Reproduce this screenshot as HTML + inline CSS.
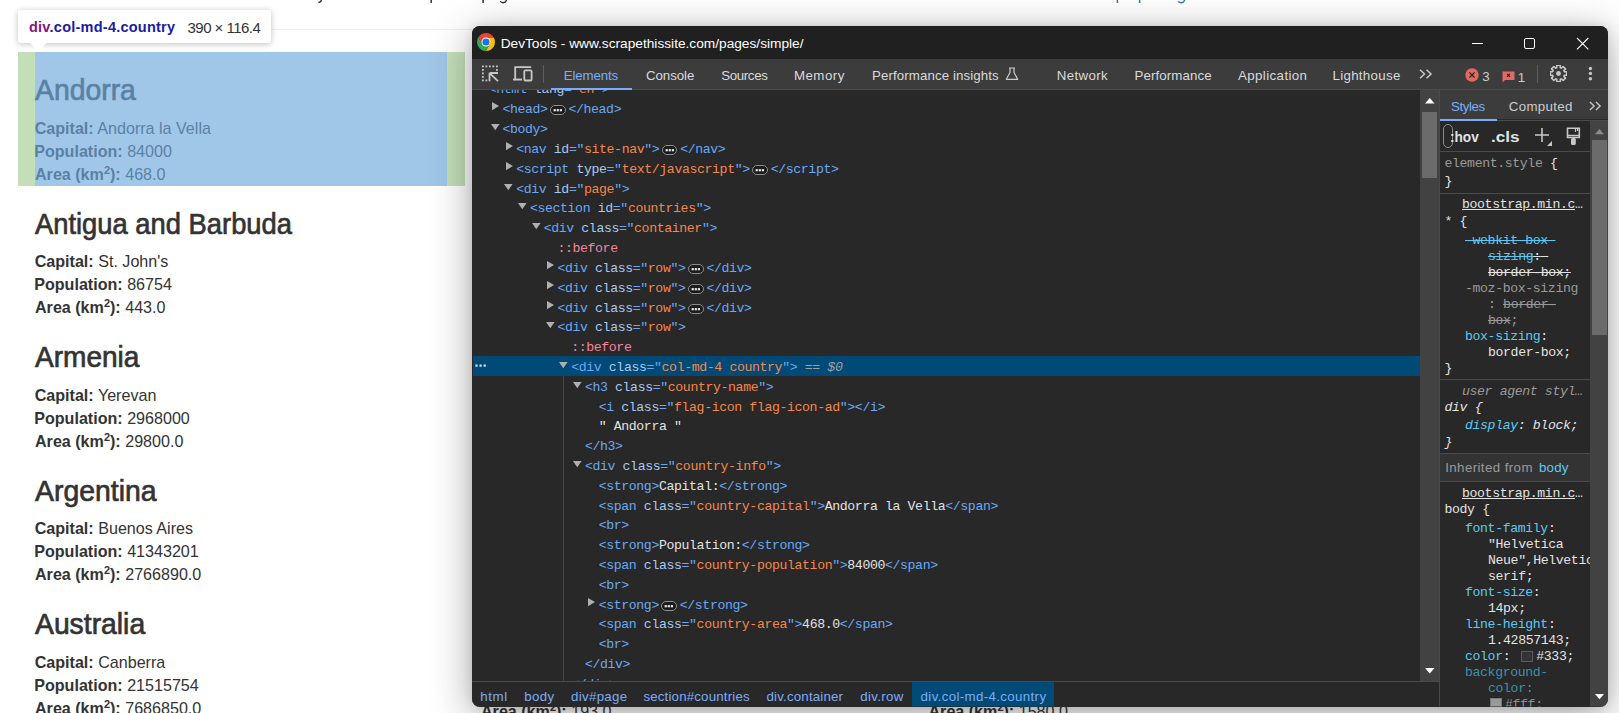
<!DOCTYPE html><html><head><meta charset="utf-8"><style>
*{margin:0;padding:0;box-sizing:border-box}
html,body{width:1619px;height:713px;overflow:hidden;background:#fff}
.t{position:absolute;white-space:pre;line-height:normal}
.a{position:absolute}
</style></head><body>
<svg class="a" style="left:0;top:0" width="1619" height="8" fill="none">
<path d="M321.5 -1 L321 1.2 Q320.3 2.6 318.3 2.6" stroke="#333" stroke-width="1.5"/>
<path d="M431.2 -1 V3" stroke="#333" stroke-width="1.5"/>
<path d="M483.1 -1 V3" stroke="#333" stroke-width="1.5"/>
<path d="M506.3 -1 V0.5 Q505.5 2.7 503.2 2.7 Q501 2.7 500.3 1.3" stroke="#333" stroke-width="1.4"/>
<path d="M1117.4 -1 V3" stroke="#337ab7" stroke-width="1.5"/>
<path d="M1139.6 -1 V3" stroke="#337ab7" stroke-width="1.5"/>
<path d="M1184.5 -1 V0.5 Q1183.7 2.7 1181.3 2.7 Q1179 2.7 1178.2 1.3" stroke="#337ab7" stroke-width="1.4"/>
</svg>
<div class="a" style="left:18px;top:29px;width:1590px;height:1px;background:#eee"></div>
<div class="t" style="left:35.00px;top:73.30px;font:normal normal 29.5px 'Liberation Sans';color:#333;transform:scaleX(0.9607);transform-origin:0 0;-webkit-text-stroke:0.7px #333;">Andorra</div>
<div class="t" style="left:34.70px;top:118.93px;font:normal normal 16.1px 'Liberation Sans';color:#333;"><span style="font-weight:bold">Capital:</span> Andorra la Vella</div>
<div class="t" style="left:34.20px;top:141.93px;font:normal normal 16.1px 'Liberation Sans';color:#333;"><span style="font-weight:bold">Population:</span> 84000</div>
<div class="t" style="left:35.00px;top:164.93px;font:normal normal 16.1px 'Liberation Sans';color:#333;"><span style="font-weight:bold">Area (km</span><span style="font-weight:bold;font-size:11px;position:relative;top:-6px">2</span><span style="font-weight:bold">):</span> 468.0</div>
<div class="t" style="left:35.00px;top:206.80px;font:normal normal 29.5px 'Liberation Sans';color:#333;transform:scaleX(0.9270);transform-origin:0 0;-webkit-text-stroke:0.7px #333;">Antigua and Barbuda</div>
<div class="t" style="left:34.70px;top:252.43px;font:normal normal 16.1px 'Liberation Sans';color:#333;"><span style="font-weight:bold">Capital:</span> St. John&#x27;s</div>
<div class="t" style="left:34.20px;top:275.43px;font:normal normal 16.1px 'Liberation Sans';color:#333;"><span style="font-weight:bold">Population:</span> 86754</div>
<div class="t" style="left:35.00px;top:298.43px;font:normal normal 16.1px 'Liberation Sans';color:#333;"><span style="font-weight:bold">Area (km</span><span style="font-weight:bold;font-size:11px;position:relative;top:-6px">2</span><span style="font-weight:bold">):</span> 443.0</div>
<div class="t" style="left:35.00px;top:340.30px;font:normal normal 29.5px 'Liberation Sans';color:#333;transform:scaleX(0.9507);transform-origin:0 0;-webkit-text-stroke:0.7px #333;">Armenia</div>
<div class="t" style="left:34.70px;top:385.93px;font:normal normal 16.1px 'Liberation Sans';color:#333;"><span style="font-weight:bold">Capital:</span> Yerevan</div>
<div class="t" style="left:34.20px;top:408.93px;font:normal normal 16.1px 'Liberation Sans';color:#333;"><span style="font-weight:bold">Population:</span> 2968000</div>
<div class="t" style="left:35.00px;top:431.93px;font:normal normal 16.1px 'Liberation Sans';color:#333;"><span style="font-weight:bold">Area (km</span><span style="font-weight:bold;font-size:11px;position:relative;top:-6px">2</span><span style="font-weight:bold">):</span> 29800.0</div>
<div class="t" style="left:35.00px;top:473.80px;font:normal normal 29.5px 'Liberation Sans';color:#333;transform:scaleX(0.9631);transform-origin:0 0;-webkit-text-stroke:0.7px #333;">Argentina</div>
<div class="t" style="left:34.70px;top:519.43px;font:normal normal 16.1px 'Liberation Sans';color:#333;"><span style="font-weight:bold">Capital:</span> Buenos Aires</div>
<div class="t" style="left:34.20px;top:542.43px;font:normal normal 16.1px 'Liberation Sans';color:#333;"><span style="font-weight:bold">Population:</span> 41343201</div>
<div class="t" style="left:35.00px;top:565.43px;font:normal normal 16.1px 'Liberation Sans';color:#333;"><span style="font-weight:bold">Area (km</span><span style="font-weight:bold;font-size:11px;position:relative;top:-6px">2</span><span style="font-weight:bold">):</span> 2766890.0</div>
<div class="t" style="left:35.00px;top:607.30px;font:normal normal 29.5px 'Liberation Sans';color:#333;transform:scaleX(0.9595);transform-origin:0 0;-webkit-text-stroke:0.7px #333;">Australia</div>
<div class="t" style="left:34.70px;top:652.93px;font:normal normal 16.1px 'Liberation Sans';color:#333;"><span style="font-weight:bold">Capital:</span> Canberra</div>
<div class="t" style="left:34.20px;top:675.93px;font:normal normal 16.1px 'Liberation Sans';color:#333;"><span style="font-weight:bold">Population:</span> 21515754</div>
<div class="t" style="left:35.00px;top:698.93px;font:normal normal 16.1px 'Liberation Sans';color:#333;"><span style="font-weight:bold">Area (km</span><span style="font-weight:bold;font-size:11px;position:relative;top:-6px">2</span><span style="font-weight:bold">):</span> 7686850.0</div>
<div class="t" style="left:481.00px;top:701.83px;font:normal normal 16.1px 'Liberation Sans';color:#333;"><span style="font-weight:bold">Area (km</span><span style="font-weight:bold;font-size:11px;position:relative;top:-6px">2</span><span style="font-weight:bold">):</span> 193.0</div>
<div class="t" style="left:928.50px;top:701.83px;font:normal normal 16.1px 'Liberation Sans';color:#333;"><span style="font-weight:bold">Area (km</span><span style="font-weight:bold;font-size:11px;position:relative;top:-6px">2</span><span style="font-weight:bold">):</span> 1580.0</div>
<div class="a" style="left:17.6px;top:52px;width:17.4px;height:134px;background:rgba(147,196,125,0.55)"></div>
<div class="a" style="left:447px;top:52px;width:18px;height:134px;background:rgba(147,196,125,0.55)"></div>
<div class="a" style="left:35px;top:52px;width:412px;height:134px;background:rgba(111,168,220,0.66)"></div>
<div class="a" style="left:18px;top:10px;width:253px;height:33px;background:#fff;border-radius:3px;box-shadow:0 1px 6px rgba(0,0,0,0.25)"></div>
<svg class="a" style="left:29px;top:42px" width="20" height="11" style="overflow:visible"><path d="M0.5 0 L9.5 10 L18.5 0 Z" fill="#fff"/></svg>
<div class="t" style="left:29.00px;top:19.38px;font:normal bold 14.5px 'Liberation Sans';color:#fff;letter-spacing:0.239px;"><span style="color:#881280">div</span><span style="color:#1a1aa6">.col-md-4.country</span></div>
<div class="t" style="left:187.50px;top:18.92px;font:normal normal 15px 'Liberation Sans';color:#333;letter-spacing:-0.520px;">390 × 116.4</div>
<div class="a" style="left:472px;top:26px;width:1136px;height:680.5px;border-radius:8px;background:#282828;box-shadow:0 8px 40px rgba(0,0,0,0.36),0 0 10px rgba(0,0,0,0.10)"></div>
<div class="a" style="left:0;top:0;width:1619px;height:713px;clip-path:inset(26px 11px 6.5px 472px round 8px)">
<div class="a" style="left:472px;top:26px;width:1136px;height:33px;background:#202020"></div>
<div class="a" style="left:472px;top:59px;width:1136px;height:30px;background:#3c3c3c"></div>
<div class="a" style="left:472px;top:89px;width:1136px;height:1px;background:#4a4a4a"></div>
<div class="a" style="left:472px;top:90px;width:948px;height:591px;background:#282828"></div>
<div class="a" style="left:1420px;top:90px;width:19px;height:591px;background:#424242"></div>
<div class="a" style="left:1439px;top:90px;width:1px;height:617px;background:#4a4a4a"></div>
<div class="a" style="left:472px;top:681px;width:967px;height:26px;background:#282828;border-top:1px solid #4a4a4a"></div>
<div class="a" style="left:0;top:0;width:1619px;height:713px;clip-path:inset(90px 199px 32px 472px)">
<div class="a" style="left:473px;top:356px;width:947px;height:20px;background:#004a77"></div>
<div class="a" style="left:563px;top:375.66px;width:1px;height:320px;background:#474747"></div>
<svg class="a" style="left:475px;top:363.5px" width="12" height="4"><g fill="#e0e0e0"><rect x="0.4" y="0.5" width="2.2" height="2.2"/><rect x="4.5" y="0.5" width="2.2" height="2.2"/><rect x="8.6" y="0.5" width="2.2" height="2.2"/></g></svg>
<div class="t" style="left:488.65px;top:82.01px;font:normal normal 13.2px 'Liberation Mono';color:#fff;letter-spacing:-0.380px;"><span style="color:#6aa8f6">&lt;html</span><span style="color:#6aa8f6"> </span><span style="color:#a9c9f2">lang</span><span style="color:#6aa8f6">=&quot;</span><span style="color:#f5874b">en</span><span style="color:#6aa8f6">&quot;</span><span style="color:#6aa8f6">&gt;</span></div>
<svg class="a" style="left:491.80px;top:101.90px" width="8" height="9"><path d="M0 0 V8.2 L7 4.1 Z" fill="#b0b0b0"/></svg>
<div class="t" style="left:502.40px;top:102.01px;font:normal normal 13.2px 'Liberation Mono';color:#fff;letter-spacing:-0.380px;"><span style="color:#6aa8f6">&lt;head</span><span style="color:#6aa8f6">&gt;</span></div>
<div class="a" style="left:550.14px;top:104.60px;width:15.5px;height:10.7px;border:1px solid #8e8e8e;border-radius:6px;background:#1b1b1b"></div>
<svg class="a" style="left:550.14px;top:104.60px" width="15.5" height="10.7"><g fill="#e8e8e8"><rect x="3.6" y="4.1" width="2.2" height="2.2"/><rect x="6.7" y="4.1" width="2.2" height="2.2"/><rect x="9.8" y="4.1" width="2.2" height="2.2"/></g></svg>
<div class="t" style="left:568.44px;top:102.01px;font:normal normal 13.2px 'Liberation Mono';color:#fff;letter-spacing:-0.380px;"><span style="color:#6aa8f6">&lt;/head&gt;</span></div>
<svg class="a" style="left:490.50px;top:123.60px" width="9" height="7"><path d="M0 0 H8.6 L4.3 6.2 Z" fill="#b0b0b0"/></svg>
<div class="t" style="left:502.40px;top:122.01px;font:normal normal 13.2px 'Liberation Mono';color:#fff;letter-spacing:-0.380px;"><span style="color:#6aa8f6">&lt;body</span><span style="color:#6aa8f6">&gt;</span></div>
<svg class="a" style="left:505.55px;top:141.90px" width="8" height="9"><path d="M0 0 V8.2 L7 4.1 Z" fill="#b0b0b0"/></svg>
<div class="t" style="left:516.15px;top:142.01px;font:normal normal 13.2px 'Liberation Mono';color:#fff;letter-spacing:-0.380px;"><span style="color:#6aa8f6">&lt;nav</span><span style="color:#6aa8f6"> </span><span style="color:#a9c9f2">id</span><span style="color:#6aa8f6">=&quot;</span><span style="color:#f5874b">site-nav</span><span style="color:#6aa8f6">&quot;</span><span style="color:#6aa8f6">&gt;</span></div>
<div class="a" style="left:661.91px;top:144.60px;width:15.5px;height:10.7px;border:1px solid #8e8e8e;border-radius:6px;background:#1b1b1b"></div>
<svg class="a" style="left:661.91px;top:144.60px" width="15.5" height="10.7"><g fill="#e8e8e8"><rect x="3.6" y="4.1" width="2.2" height="2.2"/><rect x="6.7" y="4.1" width="2.2" height="2.2"/><rect x="9.8" y="4.1" width="2.2" height="2.2"/></g></svg>
<div class="t" style="left:680.21px;top:142.01px;font:normal normal 13.2px 'Liberation Mono';color:#fff;letter-spacing:-0.380px;"><span style="color:#6aa8f6">&lt;/nav&gt;</span></div>
<svg class="a" style="left:505.55px;top:161.90px" width="8" height="9"><path d="M0 0 V8.2 L7 4.1 Z" fill="#b0b0b0"/></svg>
<div class="t" style="left:516.15px;top:162.01px;font:normal normal 13.2px 'Liberation Mono';color:#fff;letter-spacing:-0.380px;"><span style="color:#6aa8f6">&lt;script</span><span style="color:#6aa8f6"> </span><span style="color:#a9c9f2">type</span><span style="color:#6aa8f6">=&quot;</span><span style="color:#f5874b">text/javascript</span><span style="color:#6aa8f6">&quot;</span><span style="color:#6aa8f6">&gt;</span></div>
<div class="a" style="left:752.40px;top:164.60px;width:15.5px;height:10.7px;border:1px solid #8e8e8e;border-radius:6px;background:#1b1b1b"></div>
<svg class="a" style="left:752.40px;top:164.60px" width="15.5" height="10.7"><g fill="#e8e8e8"><rect x="3.6" y="4.1" width="2.2" height="2.2"/><rect x="6.7" y="4.1" width="2.2" height="2.2"/><rect x="9.8" y="4.1" width="2.2" height="2.2"/></g></svg>
<div class="t" style="left:770.70px;top:162.01px;font:normal normal 13.2px 'Liberation Mono';color:#fff;letter-spacing:-0.380px;"><span style="color:#6aa8f6">&lt;/script&gt;</span></div>
<svg class="a" style="left:504.25px;top:183.60px" width="9" height="7"><path d="M0 0 H8.6 L4.3 6.2 Z" fill="#b0b0b0"/></svg>
<div class="t" style="left:516.15px;top:182.01px;font:normal normal 13.2px 'Liberation Mono';color:#fff;letter-spacing:-0.380px;"><span style="color:#6aa8f6">&lt;div</span><span style="color:#6aa8f6"> </span><span style="color:#a9c9f2">id</span><span style="color:#6aa8f6">=&quot;</span><span style="color:#f5874b">page</span><span style="color:#6aa8f6">&quot;</span><span style="color:#6aa8f6">&gt;</span></div>
<svg class="a" style="left:518.00px;top:202.60px" width="9" height="7"><path d="M0 0 H8.6 L4.3 6.2 Z" fill="#b0b0b0"/></svg>
<div class="t" style="left:529.90px;top:201.01px;font:normal normal 13.2px 'Liberation Mono';color:#fff;letter-spacing:-0.380px;"><span style="color:#6aa8f6">&lt;section</span><span style="color:#6aa8f6"> </span><span style="color:#a9c9f2">id</span><span style="color:#6aa8f6">=&quot;</span><span style="color:#f5874b">countries</span><span style="color:#6aa8f6">&quot;</span><span style="color:#6aa8f6">&gt;</span></div>
<svg class="a" style="left:531.75px;top:222.60px" width="9" height="7"><path d="M0 0 H8.6 L4.3 6.2 Z" fill="#b0b0b0"/></svg>
<div class="t" style="left:543.65px;top:221.01px;font:normal normal 13.2px 'Liberation Mono';color:#fff;letter-spacing:-0.380px;"><span style="color:#6aa8f6">&lt;div</span><span style="color:#6aa8f6"> </span><span style="color:#a9c9f2">class</span><span style="color:#6aa8f6">=&quot;</span><span style="color:#f5874b">container</span><span style="color:#6aa8f6">&quot;</span><span style="color:#6aa8f6">&gt;</span></div>
<div class="t" style="left:557.40px;top:241.01px;font:normal normal 13.2px 'Liberation Mono';color:#fff;letter-spacing:-0.380px;"><span style="color:#f7849c">::before</span></div>
<svg class="a" style="left:546.80px;top:260.90px" width="8" height="9"><path d="M0 0 V8.2 L7 4.1 Z" fill="#b0b0b0"/></svg>
<div class="t" style="left:557.40px;top:261.01px;font:normal normal 13.2px 'Liberation Mono';color:#fff;letter-spacing:-0.380px;"><span style="color:#6aa8f6">&lt;div</span><span style="color:#6aa8f6"> </span><span style="color:#a9c9f2">class</span><span style="color:#6aa8f6">=&quot;</span><span style="color:#f5874b">row</span><span style="color:#6aa8f6">&quot;</span><span style="color:#6aa8f6">&gt;</span></div>
<div class="a" style="left:688.08px;top:263.60px;width:15.5px;height:10.7px;border:1px solid #8e8e8e;border-radius:6px;background:#1b1b1b"></div>
<svg class="a" style="left:688.08px;top:263.60px" width="15.5" height="10.7"><g fill="#e8e8e8"><rect x="3.6" y="4.1" width="2.2" height="2.2"/><rect x="6.7" y="4.1" width="2.2" height="2.2"/><rect x="9.8" y="4.1" width="2.2" height="2.2"/></g></svg>
<div class="t" style="left:706.38px;top:261.01px;font:normal normal 13.2px 'Liberation Mono';color:#fff;letter-spacing:-0.380px;"><span style="color:#6aa8f6">&lt;/div&gt;</span></div>
<svg class="a" style="left:546.80px;top:280.90px" width="8" height="9"><path d="M0 0 V8.2 L7 4.1 Z" fill="#b0b0b0"/></svg>
<div class="t" style="left:557.40px;top:281.01px;font:normal normal 13.2px 'Liberation Mono';color:#fff;letter-spacing:-0.380px;"><span style="color:#6aa8f6">&lt;div</span><span style="color:#6aa8f6"> </span><span style="color:#a9c9f2">class</span><span style="color:#6aa8f6">=&quot;</span><span style="color:#f5874b">row</span><span style="color:#6aa8f6">&quot;</span><span style="color:#6aa8f6">&gt;</span></div>
<div class="a" style="left:688.08px;top:283.60px;width:15.5px;height:10.7px;border:1px solid #8e8e8e;border-radius:6px;background:#1b1b1b"></div>
<svg class="a" style="left:688.08px;top:283.60px" width="15.5" height="10.7"><g fill="#e8e8e8"><rect x="3.6" y="4.1" width="2.2" height="2.2"/><rect x="6.7" y="4.1" width="2.2" height="2.2"/><rect x="9.8" y="4.1" width="2.2" height="2.2"/></g></svg>
<div class="t" style="left:706.38px;top:281.01px;font:normal normal 13.2px 'Liberation Mono';color:#fff;letter-spacing:-0.380px;"><span style="color:#6aa8f6">&lt;/div&gt;</span></div>
<svg class="a" style="left:546.80px;top:300.90px" width="8" height="9"><path d="M0 0 V8.2 L7 4.1 Z" fill="#b0b0b0"/></svg>
<div class="t" style="left:557.40px;top:301.01px;font:normal normal 13.2px 'Liberation Mono';color:#fff;letter-spacing:-0.380px;"><span style="color:#6aa8f6">&lt;div</span><span style="color:#6aa8f6"> </span><span style="color:#a9c9f2">class</span><span style="color:#6aa8f6">=&quot;</span><span style="color:#f5874b">row</span><span style="color:#6aa8f6">&quot;</span><span style="color:#6aa8f6">&gt;</span></div>
<div class="a" style="left:688.08px;top:303.60px;width:15.5px;height:10.7px;border:1px solid #8e8e8e;border-radius:6px;background:#1b1b1b"></div>
<svg class="a" style="left:688.08px;top:303.60px" width="15.5" height="10.7"><g fill="#e8e8e8"><rect x="3.6" y="4.1" width="2.2" height="2.2"/><rect x="6.7" y="4.1" width="2.2" height="2.2"/><rect x="9.8" y="4.1" width="2.2" height="2.2"/></g></svg>
<div class="t" style="left:706.38px;top:301.01px;font:normal normal 13.2px 'Liberation Mono';color:#fff;letter-spacing:-0.380px;"><span style="color:#6aa8f6">&lt;/div&gt;</span></div>
<svg class="a" style="left:545.50px;top:321.60px" width="9" height="7"><path d="M0 0 H8.6 L4.3 6.2 Z" fill="#b0b0b0"/></svg>
<div class="t" style="left:557.40px;top:320.01px;font:normal normal 13.2px 'Liberation Mono';color:#fff;letter-spacing:-0.380px;"><span style="color:#6aa8f6">&lt;div</span><span style="color:#6aa8f6"> </span><span style="color:#a9c9f2">class</span><span style="color:#6aa8f6">=&quot;</span><span style="color:#f5874b">row</span><span style="color:#6aa8f6">&quot;</span><span style="color:#6aa8f6">&gt;</span></div>
<div class="t" style="left:571.15px;top:340.01px;font:normal normal 13.2px 'Liberation Mono';color:#fff;letter-spacing:-0.380px;"><span style="color:#f7849c">::before</span></div>
<svg class="a" style="left:559.25px;top:361.60px" width="9" height="7"><path d="M0 0 H8.6 L4.3 6.2 Z" fill="#b0b0b0"/></svg>
<div class="t" style="left:571.15px;top:360.01px;font:normal normal 13.2px 'Liberation Mono';color:#fff;letter-spacing:-0.380px;"><span style="color:#6aa8f6">&lt;div</span><span style="color:#6aa8f6"> </span><span style="color:#a9c9f2">class</span><span style="color:#6aa8f6">=&quot;</span><span style="color:#f5874b">col-md-4 country</span><span style="color:#6aa8f6">&quot;</span><span style="color:#6aa8f6">&gt;</span><span style="color:#a0a0a0;font-style:italic"> == </span><span style="color:#a0a0a0;font-style:italic">$0</span></div>
<svg class="a" style="left:573.00px;top:381.60px" width="9" height="7"><path d="M0 0 H8.6 L4.3 6.2 Z" fill="#b0b0b0"/></svg>
<div class="t" style="left:584.90px;top:380.01px;font:normal normal 13.2px 'Liberation Mono';color:#fff;letter-spacing:-0.380px;"><span style="color:#6aa8f6">&lt;h3</span><span style="color:#6aa8f6"> </span><span style="color:#a9c9f2">class</span><span style="color:#6aa8f6">=&quot;</span><span style="color:#f5874b">country-name</span><span style="color:#6aa8f6">&quot;</span><span style="color:#6aa8f6">&gt;</span></div>
<div class="t" style="left:598.65px;top:400.01px;font:normal normal 13.2px 'Liberation Mono';color:#fff;letter-spacing:-0.380px;"><span style="color:#6aa8f6">&lt;i</span><span style="color:#6aa8f6"> </span><span style="color:#a9c9f2">class</span><span style="color:#6aa8f6">=&quot;</span><span style="color:#f5874b">flag-icon flag-icon-ad</span><span style="color:#6aa8f6">&quot;</span><span style="color:#6aa8f6">&gt;</span><span style="color:#6aa8f6">&lt;/i&gt;</span></div>
<div class="t" style="left:598.65px;top:419.01px;font:normal normal 13.2px 'Liberation Mono';color:#fff;letter-spacing:-0.380px;"><span style="color:#e3e3e3">&quot; Andorra &quot;</span></div>
<div class="t" style="left:584.90px;top:439.01px;font:normal normal 13.2px 'Liberation Mono';color:#fff;letter-spacing:-0.380px;"><span style="color:#6aa8f6">&lt;/h3&gt;</span></div>
<svg class="a" style="left:573.00px;top:460.60px" width="9" height="7"><path d="M0 0 H8.6 L4.3 6.2 Z" fill="#b0b0b0"/></svg>
<div class="t" style="left:584.90px;top:459.01px;font:normal normal 13.2px 'Liberation Mono';color:#fff;letter-spacing:-0.380px;"><span style="color:#6aa8f6">&lt;div</span><span style="color:#6aa8f6"> </span><span style="color:#a9c9f2">class</span><span style="color:#6aa8f6">=&quot;</span><span style="color:#f5874b">country-info</span><span style="color:#6aa8f6">&quot;</span><span style="color:#6aa8f6">&gt;</span></div>
<div class="t" style="left:598.65px;top:479.01px;font:normal normal 13.2px 'Liberation Mono';color:#fff;letter-spacing:-0.380px;"><span style="color:#6aa8f6">&lt;strong</span><span style="color:#6aa8f6">&gt;</span><span style="color:#e3e3e3">Capital:</span><span style="color:#6aa8f6">&lt;/strong&gt;</span></div>
<div class="t" style="left:598.65px;top:499.01px;font:normal normal 13.2px 'Liberation Mono';color:#fff;letter-spacing:-0.380px;"><span style="color:#6aa8f6">&lt;span</span><span style="color:#6aa8f6"> </span><span style="color:#a9c9f2">class</span><span style="color:#6aa8f6">=&quot;</span><span style="color:#f5874b">country-capital</span><span style="color:#6aa8f6">&quot;</span><span style="color:#6aa8f6">&gt;</span><span style="color:#e3e3e3">Andorra la Vella</span><span style="color:#6aa8f6">&lt;/span&gt;</span></div>
<div class="t" style="left:598.65px;top:518.01px;font:normal normal 13.2px 'Liberation Mono';color:#fff;letter-spacing:-0.380px;"><span style="color:#6aa8f6">&lt;br</span><span style="color:#6aa8f6">&gt;</span></div>
<div class="t" style="left:598.65px;top:538.01px;font:normal normal 13.2px 'Liberation Mono';color:#fff;letter-spacing:-0.380px;"><span style="color:#6aa8f6">&lt;strong</span><span style="color:#6aa8f6">&gt;</span><span style="color:#e3e3e3">Population:</span><span style="color:#6aa8f6">&lt;/strong&gt;</span></div>
<div class="t" style="left:598.65px;top:558.01px;font:normal normal 13.2px 'Liberation Mono';color:#fff;letter-spacing:-0.380px;"><span style="color:#6aa8f6">&lt;span</span><span style="color:#6aa8f6"> </span><span style="color:#a9c9f2">class</span><span style="color:#6aa8f6">=&quot;</span><span style="color:#f5874b">country-population</span><span style="color:#6aa8f6">&quot;</span><span style="color:#6aa8f6">&gt;</span><span style="color:#e3e3e3">84000</span><span style="color:#6aa8f6">&lt;/span&gt;</span></div>
<div class="t" style="left:598.65px;top:578.01px;font:normal normal 13.2px 'Liberation Mono';color:#fff;letter-spacing:-0.380px;"><span style="color:#6aa8f6">&lt;br</span><span style="color:#6aa8f6">&gt;</span></div>
<svg class="a" style="left:588.05px;top:597.90px" width="8" height="9"><path d="M0 0 V8.2 L7 4.1 Z" fill="#b0b0b0"/></svg>
<div class="t" style="left:598.65px;top:598.01px;font:normal normal 13.2px 'Liberation Mono';color:#fff;letter-spacing:-0.380px;"><span style="color:#6aa8f6">&lt;strong</span><span style="color:#6aa8f6">&gt;</span></div>
<div class="a" style="left:661.47px;top:600.60px;width:15.5px;height:10.7px;border:1px solid #8e8e8e;border-radius:6px;background:#1b1b1b"></div>
<svg class="a" style="left:661.47px;top:600.60px" width="15.5" height="10.7"><g fill="#e8e8e8"><rect x="3.6" y="4.1" width="2.2" height="2.2"/><rect x="6.7" y="4.1" width="2.2" height="2.2"/><rect x="9.8" y="4.1" width="2.2" height="2.2"/></g></svg>
<div class="t" style="left:679.77px;top:598.01px;font:normal normal 13.2px 'Liberation Mono';color:#fff;letter-spacing:-0.380px;"><span style="color:#6aa8f6">&lt;/strong&gt;</span></div>
<div class="t" style="left:598.65px;top:617.01px;font:normal normal 13.2px 'Liberation Mono';color:#fff;letter-spacing:-0.380px;"><span style="color:#6aa8f6">&lt;span</span><span style="color:#6aa8f6"> </span><span style="color:#a9c9f2">class</span><span style="color:#6aa8f6">=&quot;</span><span style="color:#f5874b">country-area</span><span style="color:#6aa8f6">&quot;</span><span style="color:#6aa8f6">&gt;</span><span style="color:#e3e3e3">468.0</span><span style="color:#6aa8f6">&lt;/span&gt;</span></div>
<div class="t" style="left:598.65px;top:637.01px;font:normal normal 13.2px 'Liberation Mono';color:#fff;letter-spacing:-0.380px;"><span style="color:#6aa8f6">&lt;br</span><span style="color:#6aa8f6">&gt;</span></div>
<div class="t" style="left:584.90px;top:657.01px;font:normal normal 13.2px 'Liberation Mono';color:#fff;letter-spacing:-0.380px;"><span style="color:#6aa8f6">&lt;/div&gt;</span></div>
<div class="t" style="left:571.15px;top:677.01px;font:normal normal 13.2px 'Liberation Mono';color:#fff;letter-spacing:-0.380px;"><span style="color:#6aa8f6">&lt;/div&gt;</span></div>
</div>
<svg class="a" style="left:477px;top:33px" width="18" height="18" viewBox="0 0 18 18">
<path d="M9 4.7 L16.9 4.7 A9 9 0 0 0 1.326 4.308 L5.276 11.15 L9 9 Z" fill="#ea4335"/>
<path d="M12.72 11.15 L8.77 17.99 A9 9 0 0 0 16.9 4.7 L9 4.7 L9 9 Z" fill="#fbbc04"/>
<path d="M5.276 11.15 L1.326 4.308 A9 9 0 0 0 8.77 17.99 L12.72 11.15 L9 9 Z" fill="#34a853"/>
<circle cx="9" cy="9" r="4.5" fill="#fff"/><circle cx="9" cy="9" r="3.6" fill="#1a73e8"/></svg>
<div class="t" style="left:500.70px;top:35.60px;font:normal normal 13.7px 'Liberation Sans';color:#ffffff;letter-spacing:0.001px;">DevTools - www.scrapethissite.com/pages/simple/</div>
<div class="a" style="left:1471.7px;top:42.9px;width:11.3px;height:1.1px;background:#fff"></div>
<div class="a" style="left:1524.1px;top:38.1px;width:11px;height:11px;border:1.1px solid #fff;border-radius:2px"></div>
<svg class="a" style="left:1576px;top:37px" width="14" height="14"><path d="M1 1 L12.3 12.3 M12.3 1 L1 12.3" stroke="#fff" stroke-width="1.1"/></svg>
<svg class="a" style="left:481px;top:64px" width="20" height="20" viewBox="0 0 20 20" fill="none">
<g fill="#c7c7c7"><rect x="1" y="1.5" width="1.8" height="1.8"/><rect x="4.5" y="1.5" width="1.8" height="1.8"/><rect x="8" y="1.5" width="1.8" height="1.8"/><rect x="11.5" y="1.5" width="1.8" height="1.8"/><rect x="15" y="1.5" width="1.8" height="1.8"/>
<rect x="1" y="5" width="1.8" height="1.8"/><rect x="1" y="8.5" width="1.8" height="1.8"/><rect x="1" y="12" width="1.8" height="1.8"/><rect x="1" y="15.5" width="1.8" height="1.8"/><rect x="4.5" y="15.5" width="1.8" height="1.8"/>
<rect x="15" y="5" width="1.8" height="1.8"/></g>
<path d="M8.5 9 H17 M8.5 9 V17.2 M8.8 9.3 L17 17.2" stroke="#c7c7c7" stroke-width="1.8"/></svg>
<svg class="a" style="left:512px;top:65px" width="22" height="17" viewBox="0 0 22 17" fill="none">
<path d="M3.2 14.5 V2.2 H19.2" stroke="#c7c7c7" stroke-width="1.8"/>
<rect x="1" y="13.6" width="9" height="1.9" fill="#c7c7c7"/>
<rect x="12.3" y="5.4" width="7.3" height="10.1" rx="1" stroke="#c7c7c7" stroke-width="1.8"/></svg>
<div class="a" style="left:543px;top:65px;width:1px;height:18px;background:#5e5e5e"></div>
<div class="t" style="left:563.80px;top:67.66px;font:normal normal 13.3px 'Liberation Sans';color:#7cacf8;letter-spacing:-0.140px;">Elements</div>
<div class="t" style="left:646.00px;top:67.66px;font:normal normal 13.3px 'Liberation Sans';color:#dadada;letter-spacing:-0.065px;">Console</div>
<div class="t" style="left:721.20px;top:67.66px;font:normal normal 13.3px 'Liberation Sans';color:#dadada;letter-spacing:-0.355px;">Sources</div>
<div class="t" style="left:793.90px;top:67.66px;font:normal normal 13.3px 'Liberation Sans';color:#dadada;letter-spacing:0.506px;">Memory</div>
<div class="t" style="left:872.00px;top:67.66px;font:normal normal 13.3px 'Liberation Sans';color:#dadada;letter-spacing:0.092px;">Performance insights</div>
<div class="t" style="left:1056.70px;top:67.66px;font:normal normal 13.3px 'Liberation Sans';color:#dadada;letter-spacing:0.364px;">Network</div>
<div class="t" style="left:1134.50px;top:67.66px;font:normal normal 13.3px 'Liberation Sans';color:#dadada;letter-spacing:0.098px;">Performance</div>
<div class="t" style="left:1238.00px;top:67.66px;font:normal normal 13.3px 'Liberation Sans';color:#dadada;letter-spacing:0.395px;">Application</div>
<div class="t" style="left:1332.50px;top:67.66px;font:normal normal 13.3px 'Liberation Sans';color:#dadada;letter-spacing:0.304px;">Lighthouse</div>
<div class="a" style="left:551px;top:88px;width:81px;height:2px;background:#7cacf8"></div>
<svg class="a" style="left:1005px;top:67px" width="14" height="14" viewBox="0 0 14 14" fill="none"><path d="M4 1 H10 M5 1 V5.5 L1.3 12.3 H12.7 L9 5.5 V1" stroke="#cccccc" stroke-width="1.2" stroke-linejoin="round"/></svg>
<svg class="a" style="left:1418.6px;top:69px" width="14" height="10" viewBox="0 0 14 10" fill="none"><path d="M1 0.8 L5.5 5 L1 9.2 M7.5 0.8 L12 5 L7.5 9.2" stroke="#c7c7c7" stroke-width="1.5"/></svg>
<svg class="a" style="left:1464.5px;top:68.3px" width="14" height="14" viewBox="0 0 14 14"><circle cx="7" cy="7" r="6.7" fill="#e46962"/><path d="M4.4 4.4 L9.6 9.6 M9.6 4.4 L4.4 9.6" stroke="#202020" stroke-width="1.3"/></svg>
<div class="t" style="left:1482.30px;top:68.86px;font:normal normal 13.3px 'Liberation Sans';color:#cccccc;">3</div>
<svg class="a" style="left:1501.5px;top:70.5px" width="14" height="12" viewBox="0 0 14 12"><path d="M0.5 0.5 H12.5 V9 H3 L0.5 11.5 Z" fill="#e46962"/><path d="M5 2.8 L8 5.8 M8 2.8 L5 5.8" stroke="#202020" stroke-width="1.1"/></svg>
<div class="t" style="left:1517.70px;top:69.96px;font:normal normal 13.3px 'Liberation Sans';color:#cccccc;">1</div>
<div class="a" style="left:1537px;top:65.4px;width:1px;height:17.3px;background:#5e5e5e"></div>
<svg class="a" style="left:1550px;top:65px" width="17" height="17" viewBox="0 0 17 17" fill="none"><path d="M6.70 2.67 L6.83 0.27 L10.17 0.27 L10.30 2.67 L11.35 3.10 L13.14 1.50 L15.50 3.86 L13.90 5.65 L14.33 6.70 L16.73 6.83 L16.73 10.17 L14.33 10.30 L13.90 11.35 L15.50 13.14 L13.14 15.50 L11.35 13.90 L10.30 14.33 L10.17 16.73 L6.83 16.73 L6.70 14.33 L5.65 13.90 L3.86 15.50 L1.50 13.14 L3.10 11.35 L2.67 10.30 L0.27 10.17 L0.27 6.83 L2.67 6.70 L3.10 5.65 L1.50 3.86 L3.86 1.50 L5.65 3.10 Z" stroke="#c7c7c7" stroke-width="1.6" stroke-linejoin="round"/><circle cx="8.5" cy="8.5" r="2.4" fill="#c7c7c7"/></svg>
<svg class="a" style="left:1587px;top:66px" width="7" height="16"><circle cx="3.4" cy="2.5" r="1.7" fill="#c7c7c7"/><circle cx="3.4" cy="7.4" r="1.7" fill="#c7c7c7"/><circle cx="3.4" cy="12.8" r="1.7" fill="#c7c7c7"/></svg>
<div class="a" style="left:911.9px;top:682px;width:142px;height:25px;background:#004a77"></div>
<div class="t" style="left:480.30px;top:688.66px;font:normal normal 13.3px 'Liberation Sans';color:#7cacf8;letter-spacing:0.578px;">html</div>
<div class="t" style="left:524.30px;top:688.66px;font:normal normal 13.3px 'Liberation Sans';color:#7cacf8;letter-spacing:0.338px;">body</div>
<div class="t" style="left:571.10px;top:688.66px;font:normal normal 13.3px 'Liberation Sans';color:#7cacf8;letter-spacing:0.289px;">div#page</div>
<div class="t" style="left:643.40px;top:688.66px;font:normal normal 13.3px 'Liberation Sans';color:#7cacf8;letter-spacing:0.173px;">section#countries</div>
<div class="t" style="left:766.50px;top:688.66px;font:normal normal 13.3px 'Liberation Sans';color:#7cacf8;letter-spacing:0.177px;">div.container</div>
<div class="t" style="left:860.30px;top:688.66px;font:normal normal 13.3px 'Liberation Sans';color:#7cacf8;letter-spacing:0.312px;">div.row</div>
<div class="t" style="left:920.60px;top:688.66px;font:normal normal 13.3px 'Liberation Sans';color:#7cacf8;letter-spacing:0.354px;">div.col-md-4.country</div>
<svg class="a" style="left:1424.5px;top:97.5px" width="10" height="6"><path d="M0 5.6 L4.75 0 L9.5 5.6 Z" fill="#fff"/></svg>
<div class="a" style="left:1422px;top:112px;width:15px;height:65.8px;background:#6b6b6b"></div>
<svg class="a" style="left:1424.5px;top:667.5px" width="10" height="6"><path d="M0 0 L4.75 5.6 L9.5 0 Z" fill="#fff"/></svg>
<div class="a" style="left:1440px;top:90px;width:168px;height:29px;background:#3c3c3c"></div>
<div class="t" style="left:1451.00px;top:98.66px;font:normal normal 13.3px 'Liberation Sans';color:#7cacf8;letter-spacing:-0.392px;">Styles</div>
<div class="t" style="left:1508.80px;top:98.66px;font:normal normal 13.3px 'Liberation Sans';color:#cccccc;letter-spacing:0.321px;">Computed</div>
<svg class="a" style="left:1589px;top:100.5px" width="13" height="10" viewBox="0 0 14 10" fill="none"><path d="M1 0.8 L5.5 5 L1 9.2 M7.5 0.8 L12 5 L7.5 9.2" stroke="#c7c7c7" stroke-width="1.5"/></svg>
<div class="a" style="left:1440px;top:119px;width:57px;height:2px;background:#7cacf8"></div>
<div class="a" style="left:1497px;top:120px;width:111px;height:1px;background:#4a4a4a"></div>
<div class="a" style="left:1440px;top:151px;width:150px;height:1px;background:#4a4a4a"></div>
<div class="a" style="left:1590px;top:121px;width:18px;height:586px;background:#424242"></div>
<svg class="a" style="left:1595px;top:129.3px" width="10" height="6"><path d="M0 5.2 L4.5 0 L9 5.2 Z" fill="#8a8a8a"/></svg>
<div class="a" style="left:1592px;top:140px;width:15px;height:195px;background:#6b6b6b"></div>
<svg class="a" style="left:1595px;top:694px" width="10" height="6"><path d="M0 0 L4.5 5.2 L9 0 Z" fill="#fff"/></svg>
<div class="a" style="left:1443px;top:124px;width:9.5px;height:23.5px;border:1px solid #8a8a8a;border-radius:5px"></div>
<div class="t" style="left:1449.53px;top:128.83px;font:normal bold 14px 'Liberation Sans';color:#e3e3e3;transform:scaleX(0.9734);transform-origin:0 0;">:hov</div>
<div class="t" style="left:1490.80px;top:128.83px;font:normal bold 14px 'Liberation Sans';color:#e3e3e3;transform:scaleX(1.2179);transform-origin:0 0;">.cls</div>
<svg class="a" style="left:1534px;top:127px" width="20" height="20"><path d="M8 1 V15 M1 8 H15" stroke="#c7c7c7" stroke-width="1.6"/><path d="M18 14 V19 H13 Z" fill="#c7c7c7"/></svg>
<svg class="a" style="left:1566px;top:127px" width="15" height="19" viewBox="0 0 15 19" fill="none"><path d="M1.5 1.2 H13.3 V10.5 H1.5 Z" stroke="#c7c7c7" stroke-width="1.6"/><path d="M1.5 8.5 H13.3" stroke="#c7c7c7" stroke-width="1.6"/><rect x="5" y="11" width="4.8" height="7" rx="1.5" fill="#c7c7c7"/><path d="M9.5 1.5 V5 M11.5 1.5 V4" stroke="#c7c7c7" stroke-width="1.2"/></svg>
<div class="a" style="left:0;top:0;width:1619px;height:713px;clip-path:inset(121px 29px 0px 1440px)">
<div class="t" style="left:1444.50px;top:156.01px;font:normal normal 13.2px 'Liberation Mono';color:#fff;letter-spacing:-0.380px;"><span style="color:#9a9a9a">element.style</span><span style="color:#e3e3e3"> {</span></div>
<div class="t" style="left:1444.50px;top:174.01px;font:normal normal 13.2px 'Liberation Mono';color:#fff;letter-spacing:-0.380px;"><span style="color:#e3e3e3">}</span></div>
<div class="a" style="left:1440px;top:193px;width:150px;height:1px;background:#4a4a4a"></div>
<div class="t" style="left:1462.00px;top:197.01px;font:normal normal 13.2px 'Liberation Mono';color:#fff;letter-spacing:-0.380px;"><span style="color:#e3e3e3;text-decoration:underline">bootstrap.min.c</span><span style="color:#e3e3e3">…</span></div>
<div class="t" style="left:1444.50px;top:214.01px;font:normal normal 13.2px 'Liberation Mono';color:#fff;letter-spacing:-0.380px;"><span style="color:#e3e3e3">* {</span></div>
<div class="t" style="left:1465.00px;top:233.01px;font:normal normal 13.2px 'Liberation Mono';color:#fff;letter-spacing:-0.380px;"><span style="color:#5cc9f5;text-decoration:line-through">-webkit-box-</span></div>
<div class="t" style="left:1488.00px;top:249.01px;font:normal normal 13.2px 'Liberation Mono';color:#fff;letter-spacing:-0.380px;"><span style="color:#5cc9f5;text-decoration:line-through">sizing</span><span style="color:#e3e3e3;text-decoration:line-through">:</span><span style="color:#e3e3e3;text-decoration:line-through"> </span></div>
<div class="t" style="left:1488.00px;top:265.01px;font:normal normal 13.2px 'Liberation Mono';color:#fff;letter-spacing:-0.380px;"><span style="color:#e3e3e3;text-decoration:line-through">border-box;</span></div>
<div class="t" style="left:1465.00px;top:281.01px;font:normal normal 13.2px 'Liberation Mono';color:#fff;letter-spacing:-0.380px;"><span style="color:#9a9a9a">-moz-box-sizing</span></div>
<div class="t" style="left:1488.00px;top:297.01px;font:normal normal 13.2px 'Liberation Mono';color:#fff;letter-spacing:-0.380px;"><span style="color:#9a9a9a">:</span><span style="color:#9a9a9a"> </span><span style="color:#9a9a9a;text-decoration:line-through">border-</span></div>
<div class="t" style="left:1488.00px;top:313.01px;font:normal normal 13.2px 'Liberation Mono';color:#fff;letter-spacing:-0.380px;"><span style="color:#9a9a9a;text-decoration:line-through">box</span><span style="color:#9a9a9a">;</span></div>
<div class="t" style="left:1465.00px;top:329.01px;font:normal normal 13.2px 'Liberation Mono';color:#fff;letter-spacing:-0.380px;"><span style="color:#5cc9f5">box-sizing</span><span style="color:#e3e3e3">:</span></div>
<div class="t" style="left:1488.00px;top:345.01px;font:normal normal 13.2px 'Liberation Mono';color:#fff;letter-spacing:-0.380px;"><span style="color:#e3e3e3">border-box;</span></div>
<div class="t" style="left:1444.50px;top:361.01px;font:normal normal 13.2px 'Liberation Mono';color:#fff;letter-spacing:-0.380px;"><span style="color:#e3e3e3">}</span></div>
<div class="a" style="left:1440px;top:379px;width:150px;height:1px;background:#4a4a4a"></div>
<div class="t" style="left:1462.00px;top:384.01px;font:italic normal 13.2px 'Liberation Mono';color:#fff;letter-spacing:-0.380px;"><span style="color:#9a9a9a">user agent styl…</span></div>
<div class="t" style="left:1444.50px;top:400.01px;font:italic normal 13.2px 'Liberation Mono';color:#fff;letter-spacing:-0.380px;"><span style="color:#e3e3e3">div {</span></div>
<div class="t" style="left:1465.00px;top:418.01px;font:italic normal 13.2px 'Liberation Mono';color:#fff;letter-spacing:-0.380px;"><span style="color:#5cc9f5">display</span><span style="color:#e3e3e3">: block;</span></div>
<div class="t" style="left:1444.50px;top:435.01px;font:italic normal 13.2px 'Liberation Mono';color:#fff;letter-spacing:-0.380px;"><span style="color:#e3e3e3">}</span></div>
<div class="a" style="left:1440px;top:453px;width:150px;height:29px;background:#333333;border-top:1px solid #4a4a4a;border-bottom:1px solid #4a4a4a"></div>
<div class="t" style="left:1445.20px;top:459.96px;font:normal normal 13.3px 'Liberation Sans';color:#9a9a9a;letter-spacing:0.403px;">Inherited from</div>
<div class="t" style="left:1539.00px;top:459.96px;font:normal normal 13.3px 'Liberation Sans';color:#5cc9f5;letter-spacing:0.205px;">body</div>
<div class="t" style="left:1462.00px;top:486.01px;font:normal normal 13.2px 'Liberation Mono';color:#fff;letter-spacing:-0.380px;"><span style="color:#e3e3e3;text-decoration:underline">bootstrap.min.c</span><span style="color:#e3e3e3">…</span></div>
<div class="t" style="left:1444.50px;top:502.01px;font:normal normal 13.2px 'Liberation Mono';color:#fff;letter-spacing:-0.380px;"><span style="color:#e3e3e3">body {</span></div>
<div class="t" style="left:1465.00px;top:521.01px;font:normal normal 13.2px 'Liberation Mono';color:#fff;letter-spacing:-0.380px;"><span style="color:#5cc9f5">font-family</span><span style="color:#e3e3e3">:</span></div>
<div class="t" style="left:1488.00px;top:537.01px;font:normal normal 13.2px 'Liberation Mono';color:#fff;letter-spacing:-0.380px;"><span style="color:#e3e3e3">&quot;Helvetica</span></div>
<div class="t" style="left:1488.00px;top:553.01px;font:normal normal 13.2px 'Liberation Mono';color:#fff;letter-spacing:-0.380px;"><span style="color:#e3e3e3">Neue&quot;,Helvetica,Arial,sans-</span></div>
<div class="t" style="left:1488.00px;top:569.01px;font:normal normal 13.2px 'Liberation Mono';color:#fff;letter-spacing:-0.380px;"><span style="color:#e3e3e3">serif;</span></div>
<div class="t" style="left:1465.00px;top:585.01px;font:normal normal 13.2px 'Liberation Mono';color:#fff;letter-spacing:-0.380px;"><span style="color:#5cc9f5">font-size</span><span style="color:#e3e3e3">:</span></div>
<div class="t" style="left:1488.00px;top:601.01px;font:normal normal 13.2px 'Liberation Mono';color:#fff;letter-spacing:-0.380px;"><span style="color:#e3e3e3">14px;</span></div>
<div class="t" style="left:1465.00px;top:617.01px;font:normal normal 13.2px 'Liberation Mono';color:#fff;letter-spacing:-0.380px;"><span style="color:#5cc9f5">line-height</span><span style="color:#e3e3e3">:</span></div>
<div class="t" style="left:1488.00px;top:633.01px;font:normal normal 13.2px 'Liberation Mono';color:#fff;letter-spacing:-0.380px;"><span style="color:#e3e3e3">1.42857143;</span></div>
<div class="t" style="left:1465.00px;top:649.01px;font:normal normal 13.2px 'Liberation Mono';color:#fff;letter-spacing:-0.380px;"><span style="color:#5cc9f5">color</span><span style="color:#e3e3e3">:</span></div>
<div class="t" style="left:1536.30px;top:649.01px;font:normal normal 13.2px 'Liberation Mono';color:#fff;letter-spacing:-0.380px;"><span style="color:#e3e3e3">#333;</span></div>
<div class="a" style="left:1521.2px;top:650.7px;width:11.6px;height:11px;background:#333;border:1px solid #5a5a5a"></div>
<div class="t" style="left:1465.00px;top:665.01px;font:normal normal 13.2px 'Liberation Mono';color:#fff;letter-spacing:-0.380px;"><span style="color:#3f8fae">background-</span></div>
<div class="t" style="left:1488.00px;top:681.01px;font:normal normal 13.2px 'Liberation Mono';color:#fff;letter-spacing:-0.380px;"><span style="color:#3f8fae">color:</span></div>
<div class="a" style="left:1490.4px;top:698px;width:11.4px;height:11px;background:#9a9a9a;border:1px solid #777"></div>
<div class="t" style="left:1505.00px;top:697.01px;font:normal normal 13.2px 'Liberation Mono';color:#fff;letter-spacing:-0.380px;"><span style="color:#8f8f8f">#fff;</span></div>
</div>
</div>
</body></html>
